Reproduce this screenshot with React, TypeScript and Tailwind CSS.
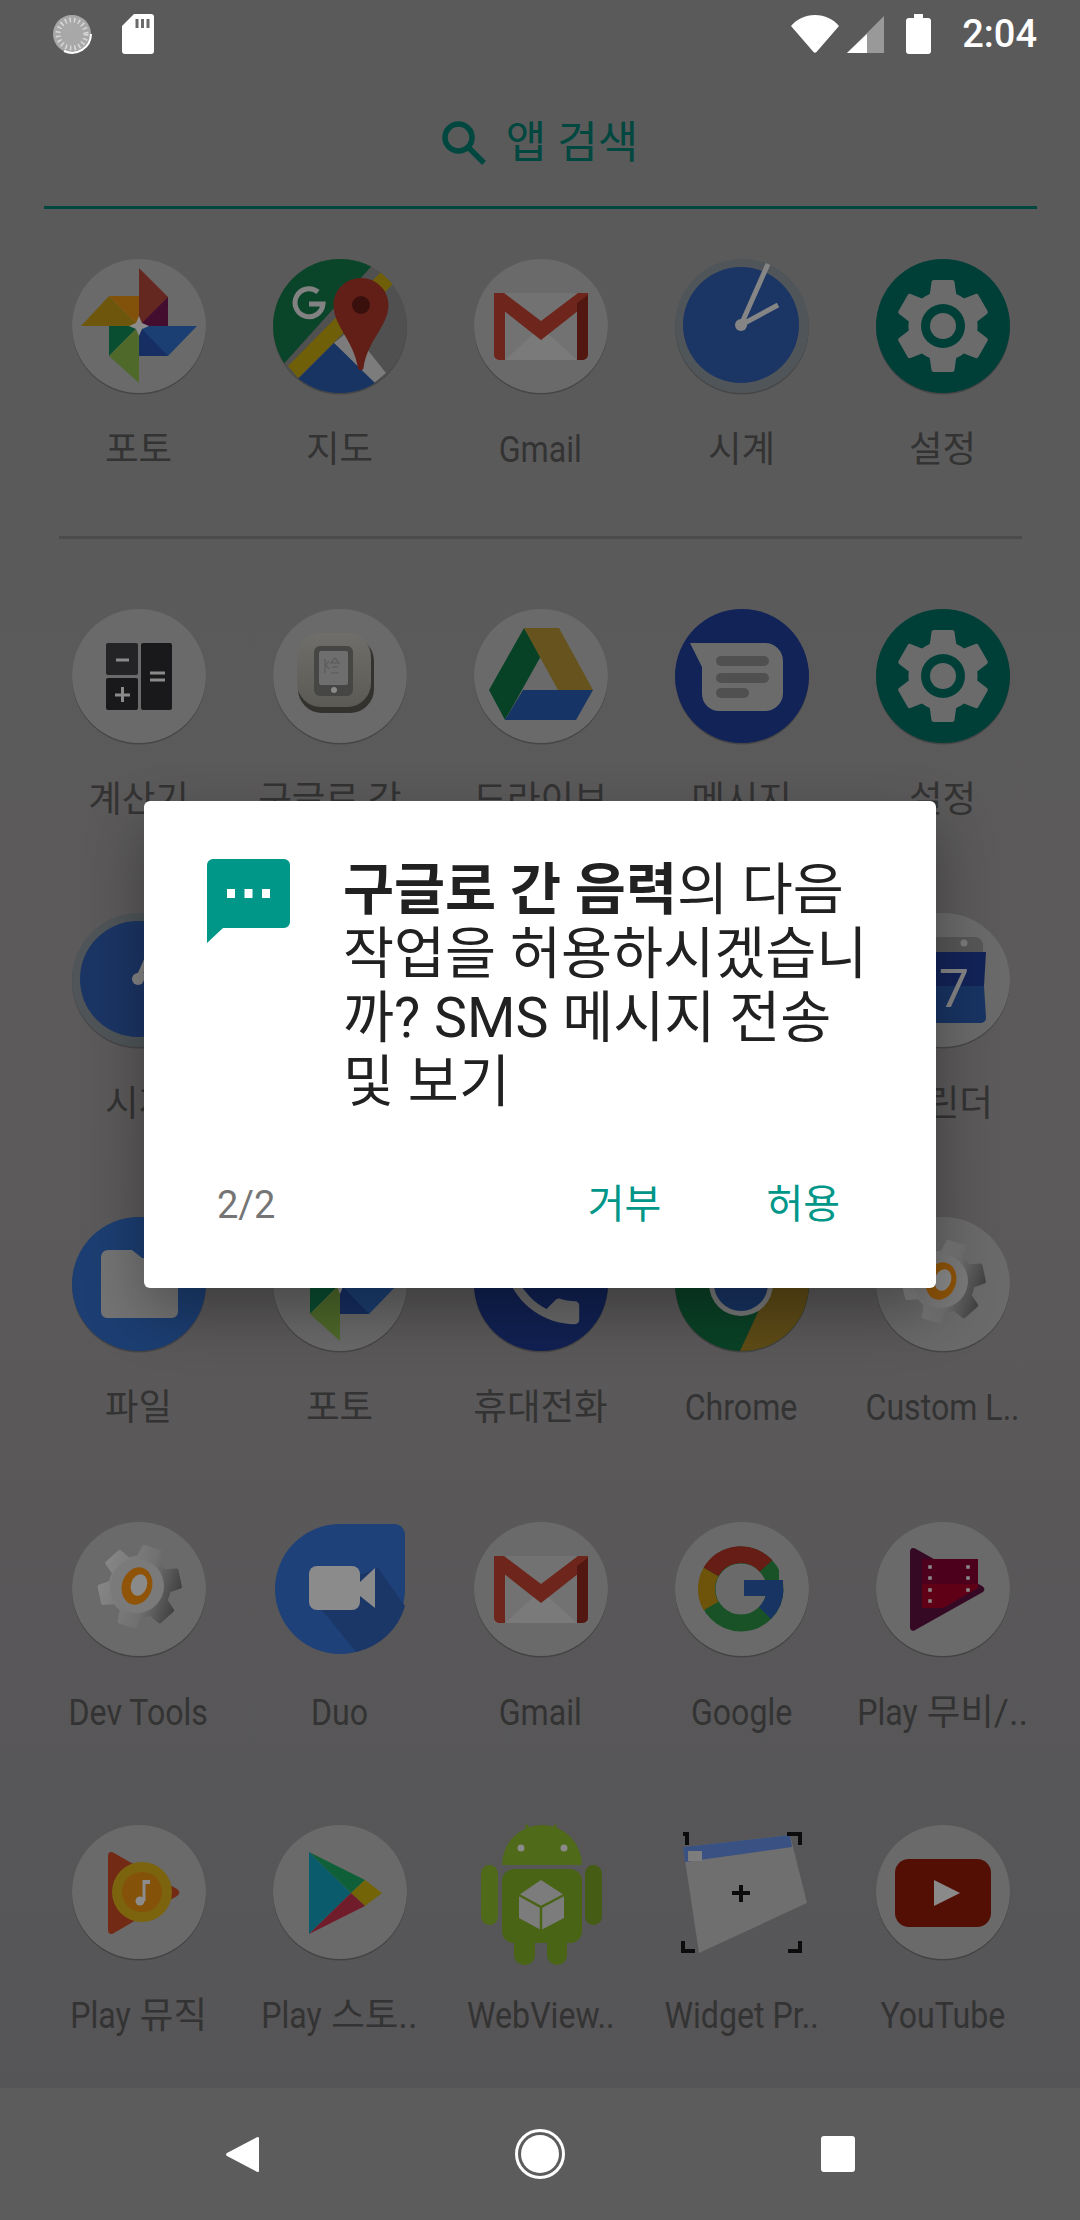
import type { ReactNode } from 'react';

const GEAR =
  'M19.14 12.94c.04-.3.06-.61.06-.94 0-.32-.02-.64-.07-.94l2.03-1.58c.18-.14.23-.41.12-.61l-1.92-3.32c-.12-.22-.37-.29-.59-.22l-2.39.96c-.5-.38-1.03-.7-1.62-.94l-.36-2.54c-.04-.24-.24-.41-.48-.41h-3.84c-.24 0-.43.17-.47.41l-.36 2.54c-.59.24-1.13.57-1.62.94l-2.39-.96c-.22-.08-.47 0-.59.22L2.74 8.87c-.12.21-.08.47.12.61l2.03 1.58c-.05.3-.09.63-.09.94s.02.64.07.94l-2.03 1.58c-.18.14-.23.41-.12.61l1.92 3.32c.12.22.37.29.59.22l2.39-.96c.5.38 1.03.7 1.62.94l.36 2.54c.05.24.24.41.48.41h3.84c.24 0 .44-.17.47-.41l.36-2.54c.59-.24 1.13-.56 1.62-.94l2.39.96c.22.08.47 0 .59-.22l1.92-3.32c.12-.22.07-.47-.12-.61l-2.01-1.58z';

const CIRCLE = '#6a6a6a';

function Badge({ bg = CIRCLE, children }: { bg?: string; children?: ReactNode }) {
  return (
    <svg width="134" height="134" viewBox="0 0 134 134" className="block overflow-visible">
      <circle cx="67" cy="68.5" r="67" fill="#000" opacity="0.22" />
      <circle cx="67" cy="67" r="67" fill={bg} />
      {children}
    </svg>
  );
}

function Photos() {
  return (
    <Badge>
      <polygon points="67,9 96,38 96,50 67,67" fill="#642820" />
      <polygon points="96,38 96,67 67,67" fill="#420d2e" />
      <polygon points="67,67 125,67 96,97 67,97" fill="#1b3f72" />
      <polygon points="67,67 96,97 67,97" fill="#162e62" />
      <polygon points="37,67 67,67 37,97" fill="#0a4e32" />
      <polygon points="67,67 67,124 37,97" fill="#4e692a" />
      <polygon points="9,67 37,37 67,67" fill="#6e570d" />
      <polygon points="37,37 67,37 67,67" fill="#83520a" />
      <polygon points="67,57 70,64 77,67 70,70 67,77 64,70 57,67 64,64" fill="#8c8c8c" />
    </Badge>
  );
}

function Maps() {
  return (
    <Badge bg="#505050">
      <defs>
        <clipPath id="maps-clip">
          <circle cx="67" cy="67" r="67" />
        </clipPath>
      </defs>
      <g clipPath="url(#maps-clip)">
        <polygon points="0,0 105,0 8,108 0,120" fill="#0b4529" />
        <polygon points="61,84 101,124 113,114 78,70" fill="#7c7c7c" />
        <polygon points="25,120 61,84 102,124 80,140 30,140" fill="#183463" />
        <polygon points="15,107 25,119 120,25 108,13" fill="#6e5f08" />
      </g>
      <path d="M88 19c-15 0-27.500 12-27.500 27 0 21 20 35 24.500 63 .5 3 5 3 5.500 0 4-28 25-42 25-63 0-15-12.500-27-27.500-27z" fill="#621f17" />
      <circle cx="88" cy="46" r="9" fill="#3a100c" />
      <path d="M45 33a14 14 0 1 0 5 12H36" fill="none" stroke="#828282" strokeWidth="5" />
    </Badge>
  );
}

function Gmail() {
  return (
    <Badge>
      <rect x="20" y="34" width="94" height="67" fill="#727272" />
      <polygon points="31,101 67,68 103,101" fill="#7a7a7a" />
      <polygon points="20,34 30,34 67,62 104,34 114,34 114,44 67,81 20,44" fill="#6e251c" />
      <path d="M20 36h11v65h-6a5 5 0 0 1-5-5z" fill="#6e251c" />
      <path d="M103 44l11-8v60a5 5 0 0 1-5 5h-6z" fill="#521710" />
    </Badge>
  );
}

function Clock() {
  return (
    <Badge bg="#4f5558">
      <circle cx="66" cy="66" r="58" fill="#1b3565" />
      <path d="M66 66L93 5M66 66L103 46" stroke="#858585" strokeWidth="5" />
      <circle cx="66" cy="66" r="6" fill="#858585" />
    </Badge>
  );
}

function Settings() {
  return (
    <Badge bg="#003f38">
      <path d={GEAR} transform="translate(9.4 9.4) scale(4.8)" fill="#6b6b6b" />
      <circle cx="67" cy="67" r="22" fill="#003f38" />
      <circle cx="67" cy="67" r="13" fill="#6b6b6b" />
    </Badge>
  );
}

function Calculator() {
  return (
    <Badge>
      <rect x="34" y="34" width="32" height="32" rx="2" fill="#242426" />
      <rect x="34" y="69" width="32" height="32" rx="2" fill="#19191b" />
      <rect x="69" y="34" width="31" height="67" rx="2" fill="#19191b" />
      <path d="M44 51h13M43 86h15M50.500 78v15M78 64h15M78 71h15" stroke="#8a8a8a" strokeWidth="3" />
    </Badge>
  );
}

function GuGo() {
  return (
    <Badge>
      <defs>
        <linearGradient id="gugo-body" x1="0" y1="0" x2="0" y2="1">
          <stop offset="0" stopColor="#6f6e6a" />
          <stop offset="1" stopColor="#5b5a55" />
        </linearGradient>
      </defs>
      <rect x="25" y="28" width="76" height="76" rx="24" fill="#33322f" />
      <rect x="24" y="24" width="74" height="74" rx="24" fill="url(#gugo-body)" />
      <rect x="41" y="37" width="39" height="50" rx="6" fill="#464644" />
      <rect x="46" y="42" width="29" height="34" rx="2" fill="#6e6e6e" />
      <circle cx="61" cy="81" r="3" fill="#8a8a8a" />
      <path d="M52 50v14M56 52l-3 4 3 4M62 49l-4 5h8l-4-5M59 58h6M58 64h8" stroke="#5a5a5a" strokeWidth="1.200" fill="none" />
    </Badge>
  );
}

function Drive() {
  return (
    <Badge>
      <polygon points="50,19 15,81 31,111 67,47" fill="#084226" />
      <polygon points="50,19 85,19 119,81 84,81" fill="#66531d" />
      <polygon points="49,81 119,81 102,111 31,111" fill="#173466" />
    </Badge>
  );
}

function Messages() {
  return (
    <Badge bg="#122358">
      <path d="M15 34h75a18 18 0 0 1 18 18v32a18 18 0 0 1-18 18H44a17 17 0 0 1-17-17V58z" fill="#6b6b6b" />
      <rect x="41" y="47" width="53" height="10" rx="5" fill="#505050" />
      <rect x="41" y="64" width="53" height="10" rx="5" fill="#505050" />
      <rect x="41" y="79" width="33" height="10" rx="5" fill="#505050" />
    </Badge>
  );
}

function Calendar() {
  return (
    <Badge>
      <path d="M24 39v-7a8 8 0 0 1 8-8h67a8 8 0 0 1 8 8v7z" fill="#565656" />
      <circle cx="88" cy="30" r="3.500" fill="#7a7a7a" />
      <path d="M24 39h86l-2 34H26z" fill="#122358" />
      <path d="M26 73h82l2 32a5 5 0 0 1-5 5H29a5 5 0 0 1-5-5z" fill="#183463" />
      <text x="78" y="94" textAnchor="middle" fontSize="54" fontFamily="Roboto, sans-serif" fill="#858585">
        7
      </text>
    </Badge>
  );
}

function Files() {
  return (
    <Badge bg="#1c3e72">
      <path d="M29 40a7 7 0 0 1 7-7h24l10 8h30a6 6 0 0 1 6 6v48a6 6 0 0 1-6 6H35a6 6 0 0 1-6-6z" fill="#747474" />
    </Badge>
  );
}

function Phone() {
  return (
    <Badge bg="#112153">
      <path
        d="M6.620 10.790c1.440 2.830 3.760 5.140 6.590 6.590l2.200-2.200c.27-.27.67-.36 1.020-.24 1.120.37 2.330.57 3.570.57.55 0 1 .45 1 1V20c0 .55-.45 1-1 1-9.390 0-17-7.610-17-17 0-.55.45-1 1-1h3.500c.55 0 1 .45 1 1 0 1.250.2 2.450.57 3.570.11.35.03.74-.25 1.020l-2.200 2.200z"
        transform="translate(17 19) scale(4.200)"
        fill="#6b6b6b"
      />
    </Badge>
  );
}

function Chrome() {
  return (
    <Badge bg="#0a4226">
      <defs>
        <clipPath id="chrome-clip">
          <circle cx="67" cy="67" r="67" />
        </clipPath>
      </defs>
      <g clipPath="url(#chrome-clip)">
        <rect x="0" y="0" width="134" height="45" fill="#621c14" />
        <polygon points="64,136 90,80 96,45 134,45 134,136" fill="#5e4b16" />
      </g>
      <circle cx="66" cy="67" r="32" fill="#7a7a7a" />
      <circle cx="66" cy="67" r="27" fill="#183463" />
    </Badge>
  );
}

function DevGear() {
  return (
    <Badge>
      <defs>
        <linearGradient id="dev-gear" x1="0" y1="0" x2="1" y2="0">
          <stop offset="0" stopColor="#868686" />
          <stop offset="0.6" stopColor="#707070" />
          <stop offset="1" stopColor="#404040" />
        </linearGradient>
      </defs>
      <path d={GEAR} transform="rotate(18 67 67) translate(15.400 13) scale(4.300)" fill="url(#dev-gear)" />
      <circle cx="65" cy="64" r="27" fill="#7a7a7a" />
      <ellipse cx="65" cy="64" rx="15" ry="19" transform="rotate(18 65 64)" fill="#8f5408" />
      <ellipse cx="67" cy="63" rx="8" ry="11" transform="rotate(18 67 63)" fill="#8a8a8a" />
    </Badge>
  );
}

function Duo() {
  return (
    <svg width="134" height="134" viewBox="0 0 134 134" className="block">
      <path d="M67 2h54a11 11 0 0 1 11 11v54a65 65 0 1 1-65-65z" fill="#1e417a" />
      <path d="M105 46l27 38a65 65 0 0 1-49 46L36 72z" fill="#1b3768" />
      <rect x="36" y="44" width="51" height="44" rx="8" fill="#8b8b8b" />
      <polygon points="87,60 102,46 102,86 87,74" fill="#8b8b8b" />
    </svg>
  );
}

function Google() {
  return (
    <Badge>
      <circle cx="66" cy="67" r="34" fill="none" stroke="#195227" strokeWidth="17" />
      <path d="M91 44A34 34 0 0 0 36 50" fill="none" stroke="#651d15" strokeWidth="17" />
      <path d="M36 50A34 34 0 0 0 36 84" fill="none" stroke="#6e530a" strokeWidth="17" />
      <path d="M100 67a34 34 0 0 1-10 24" fill="none" stroke="#183463" strokeWidth="17" />
      <rect x="69" y="58" width="39" height="16" fill="#183463" />
      <rect x="104" y="44" width="8" height="14" fill={CIRCLE} />
    </Badge>
  );
}

function PlayMovies() {
  return (
    <Badge>
      <path d="M34 30c0-4 3-5 6-3l66 37c3 2 3 4 1 6l-66 37c-4 3-7 2-7-2z" fill="#350924" />
      <rect x="46" y="37" width="56" height="25" fill="#4c001c" />
      <path d="M46 62h56v4L67 86H46z" fill="#600016" />
      <path d="M54 45h0M54 56h0M54 68h0M54 79h0M92 45h0M92 56h0M92 68h0" stroke="#8a8a8a" strokeWidth="3.500" strokeLinecap="square" />
    </Badge>
  );
}

function PlayMusic() {
  return (
    <Badge>
      <path d="M36 31c0-4 3-5 6-3l63 36c3 2 3 5 0 7l-63 37c-3 2-6 1-6-3z" fill="#722a15" />
      <circle cx="70" cy="67" r="30" fill="#7c640e" />
      <circle cx="70" cy="67" r="20" fill="#85520a" />
      <path d="M72 55v21" stroke="#8c8c8c" strokeWidth="3" />
      <circle cx="68" cy="76" r="4.500" fill="#8c8c8c" />
      <path d="M72 55h6v4h-6z" fill="#8c8c8c" />
    </Badge>
  );
}

function PlayStore() {
  return (
    <Badge>
      <polygon points="36,27 36,109 78,68" fill="#0a5c6c" />
      <polygon points="36,27 78,68 92,55" fill="#0f6038" />
      <polygon points="92,55 109,68 92,81 78,68" fill="#726407" />
      <polygon points="36,109 78,68 92,81" fill="#701c2b" />
    </Badge>
  );
}

function WebView() {
  return (
    <svg width="134" height="140" viewBox="0 0 134 140" className="block overflow-visible">
      <path d="M52 0l7 12M82 0l-7 12" stroke="#4f6a18" strokeWidth="3" />
      <path d="M28 40a39 39 0 0 1 80 0z" fill="#4f6a18" />
      <rect x="28" y="44" width="80" height="74" rx="12" fill="#4a6416" />
      <rect x="7" y="40" width="17" height="60" rx="8.500" fill="#4f6a18" />
      <rect x="111" y="40" width="17" height="60" rx="8.500" fill="#445c13" />
      <rect x="40" y="110" width="21" height="30" rx="10" fill="#4a6416" />
      <rect x="73" y="110" width="20" height="30" rx="10" fill="#4a6416" />
      <circle cx="47" cy="23" r="3.500" fill="#8a8a8a" />
      <circle cx="90" cy="23" r="3.500" fill="#8a8a8a" />
      <polygon points="67,55 90,70 90,93 67,105 45,93 45,70" fill="#7c7c7c" />
      <path d="M45 70L67 82L90 70M67 82V105" fill="none" stroke="#4a6416" strokeWidth="2.500" />
    </svg>
  );
}

function Widget() {
  return (
    <svg width="134" height="134" viewBox="0 0 134 134" className="block overflow-visible">
      <polygon points="8,22 115,10 132,78 24,128" fill="#6f6f6f" />
      <polygon points="8,22 115,10 117,22 10,37" fill="#3a5184" />
      <rect x="13" y="26" width="14" height="10" fill="#7d7d7d" />
      <path d="M66 60v17M57 68h18" stroke="#0c0c0c" strokeWidth="4" />
      <path d="M12 20V9h-4M112 9h13v11M8 116v10h12M125 116v10h-12" fill="none" stroke="#0c0c0c" strokeWidth="4" />
    </svg>
  );
}

function YouTube() {
  return (
    <Badge>
      <rect x="19" y="34" width="96" height="68" rx="14" fill="#540f05" />
      <polygon points="58,55 84,68 58,81" fill="#8a8a8a" />
    </Badge>
  );
}

function Label({ children, latin }: { children: ReactNode; latin?: boolean }) {
  return (
    <div className="mt-[33px] flex h-[48px] w-full items-center justify-center whitespace-nowrap text-[36.5px] leading-[48px] text-[#333333]">
      {latin ? <span className="inline-block scale-x-[0.88]">{children}</span> : <span>{children}</span>}
    </div>
  );
}

function Play() {
  return <span className="-mx-[4px] inline-block scale-x-[0.88]">Play</span>;
}

function Cell({ icon, label, latin }: { icon?: ReactNode; label?: ReactNode; latin?: boolean }) {
  return (
    <div className="flex flex-col items-center">
      <div className="h-[134px] w-[134px]">{icon}</div>
      {label && <Label latin={latin}>{label}</Label>}
    </div>
  );
}

function AppRow({ children, className }: { children: ReactNode; className: string }) {
  return <div className={`grid grid-cols-5 ${className}`}>{children}</div>;
}

function StatusBar() {
  return (
    <div className="flex h-[63px] items-center justify-between pl-[52px] pr-[43px] pt-[5px] text-white">
      <div className="flex items-center gap-[30px]">
        <svg width="40" height="40" viewBox="0 0 40 40">
          <circle cx="20" cy="20" r="19" fill="#a8a8a8" />
          <circle cx="20" cy="20" r="14" fill="none" stroke="#d8d8d8" strokeWidth="5" strokeDasharray="1.500 3" />
          <path d="M39 20a19 19 0 0 1-27 17" fill="none" stroke="#ffffff" strokeWidth="2" />
        </svg>
        <svg width="32" height="40" viewBox="0 0 32 40">
          <path d="M12 0h17a3 3 0 0 1 3 3v34a3 3 0 0 1-3 3H3a3 3 0 0 1-3-3V12z" fill="#ffffff" />
          <path d="M15 5v9M20.500 5v9M26 5v9" stroke="#6a6a6a" strokeWidth="3" />
        </svg>
      </div>
      <div className="flex items-center">
        <svg width="48" height="38" viewBox="0 0 48 38" className="mr-[8px]">
          <path d="M0 11C6 4 14 0 24 0s18 4 24 11L25.500 37c-.8 1-2.200 1-3 0z" fill="#ffffff" />
        </svg>
        <svg width="37" height="37" viewBox="0 0 37 37" className="mr-[22px]">
          <path d="M37 0v37H0z" fill="#999999" />
          <path d="M20 18v19H0z" fill="#ffffff" />
        </svg>
        <svg width="25" height="40" viewBox="0 0 25 40" className="mr-[31px]">
          <path d="M8 0h9v4h5a3 3 0 0 1 3 3v30a3 3 0 0 1-3 3H3a3 3 0 0 1-3-3V7a3 3 0 0 1 3-3h5z" fill="#ffffff" />
        </svg>
        <span className="font-['Roboto',sans-serif] text-[38px] font-medium leading-none">2:04</span>
      </div>
    </div>
  );
}

function NavBar() {
  return (
    <div className="flex h-[132px] items-center bg-[#5c5c5c]">
      <div className="grid w-full grid-cols-3 items-center justify-items-center">
        <svg width="33" height="37" viewBox="0 0 33 37" className="ml-[124px]">
          <path d="M31 1.200c1-.6 2-.1 2 1.300v32c0 1.400-1 1.900-2 1.300L1 20c-1.300-.8-1.300-2.200 0-3z" fill="#ffffff" />
        </svg>
        <svg width="50" height="50" viewBox="0 0 50 50">
          <circle cx="25" cy="25" r="23.500" fill="none" stroke="#ffffff" strokeWidth="3" />
          <circle cx="25" cy="25" r="19" fill="#ffffff" />
        </svg>
        <div className="mr-[124px] h-[36px] w-[34px] rounded-[3px] bg-white" />
      </div>
    </div>
  );
}

function PermissionDialog() {
  return (
    <div className="absolute left-[144px] top-[801px] flex h-[487px] w-[792px] flex-col rounded-[6px] bg-white pl-[63px] pr-[50px] pt-[58px] shadow-[0_24px_60px_rgba(0,0,0,0.32)]">
      <div className="flex">
        <svg width="83" height="84" viewBox="0 0 83 84" className="shrink-0">
          <path d="M6 0h71a6 6 0 0 1 6 6v57a6 6 0 0 1-6 6H16L0 84V6a6 6 0 0 1 6-6z" fill="#009688" />
          <path d="M20 30h8v9h-8zM37.500 30h8v9h-8zM55 30h8v9h-8z" fill="#ffffff" />
        </svg>
        <p className="ml-[53px] font-['Roboto','Noto_Sans_CJK_KR',sans-serif] text-[55.5px] leading-[64px] text-[#212121]">
          <span className="font-bold">구글로 간 음력</span>의 다음
          <br />
          작업을 허용하시겠습니
          <br />
          까? SMS 메시지 전송
          <br />및 보기
        </p>
      </div>
      <div className="absolute bottom-[58px] left-[73px] right-[96px] flex h-[50px] items-center text-[38px] leading-[50px]">
        <span className="text-[#757575]">2/2</span>
        <span className="ml-auto text-[40px] text-[#009688]">거부</span>
        <span className="ml-[105px] text-[40px] text-[#009688]">허용</span>
      </div>
    </div>
  );
}

export default function App() {
  return (
    <div className="relative flex h-[2220px] w-[1080px] flex-col overflow-hidden bg-gradient-to-b from-[#5a5a5a] via-[#5c5a5b] to-[#555456] font-['Roboto','Noto_Sans_CJK_KR',sans-serif]">
      <StatusBar />
      <div className="flex h-[143px] items-center justify-center gap-[20px] pt-[16px] text-[#00473f]">
        <svg width="44" height="44" viewBox="0 0 44 44">
          <path d="M16.500 3a13.500 13.500 0 1 1 0 27 13.500 13.500 0 0 1 0-27zM26 26l16 16" fill="none" stroke="#00473f" strokeWidth="5.500" />
        </svg>
        <span className="text-[44px] leading-none">앱 검색</span>
      </div>
      <div className="ml-[44px] mr-[43px] h-[3px] shrink-0 bg-[#00473f]" />

      <div className="flex-1 pl-[38px] pr-[37px] pt-[50px]">
        <AppRow className="h-[277px]">
          <Cell icon={<Photos />} label="포토" />
          <Cell icon={<Maps />} label="지도" />
          <Cell icon={<Gmail />} label="Gmail" latin />
          <Cell icon={<Clock />} label="시계" />
          <Cell icon={<Settings />} label="설정" />
        </AppRow>
        <div className="mx-[21px] h-[3px] bg-[#4c4b4c]" />
        <AppRow className="mt-[70px] h-[304px]">
          <Cell icon={<Calculator />} label="계산기" />
          <Cell icon={<GuGo />} label="구글로 간.." />
          <Cell icon={<Drive />} label="드라이브" />
          <Cell icon={<Messages />} label="메시지" />
          <Cell icon={<Settings />} label="설정" />
        </AppRow>
        <AppRow className="h-[304px]">
          <Cell icon={<Clock />} label="시계" />
          <Cell />
          <Cell />
          <Cell />
          <Cell icon={<Calendar />} label="캘린더" />
        </AppRow>
        <AppRow className="h-[305px]">
          <Cell icon={<Files />} label="파일" />
          <Cell icon={<Photos />} label="포토" />
          <Cell icon={<Phone />} label="휴대전화" />
          <Cell icon={<Chrome />} label="Chrome" latin />
          <Cell icon={<DevGear />} label="Custom L.." latin />
        </AppRow>
        <AppRow className="h-[303px]">
          <Cell icon={<DevGear />} label="Dev Tools" latin />
          <Cell icon={<Duo />} label="Duo" latin />
          <Cell icon={<Gmail />} label="Gmail" latin />
          <Cell icon={<Google />} label="Google" latin />
          <Cell
            icon={<PlayMovies />}
            label={
              <>
                <Play /> 무비/..
              </>
            }
          />
        </AppRow>
        <AppRow className="h-[263px]">
          <Cell
            icon={<PlayMusic />}
            label={
              <>
                <Play /> 뮤직
              </>
            }
          />
          <Cell
            icon={<PlayStore />}
            label={
              <>
                <Play /> 스토..
              </>
            }
          />
          <Cell icon={<WebView />} label="WebView.." latin />
          <Cell icon={<Widget />} label="Widget Pr.." latin />
          <Cell icon={<YouTube />} label="YouTube" latin />
        </AppRow>
      </div>

      <NavBar />
      <PermissionDialog />
    </div>
  );
}
